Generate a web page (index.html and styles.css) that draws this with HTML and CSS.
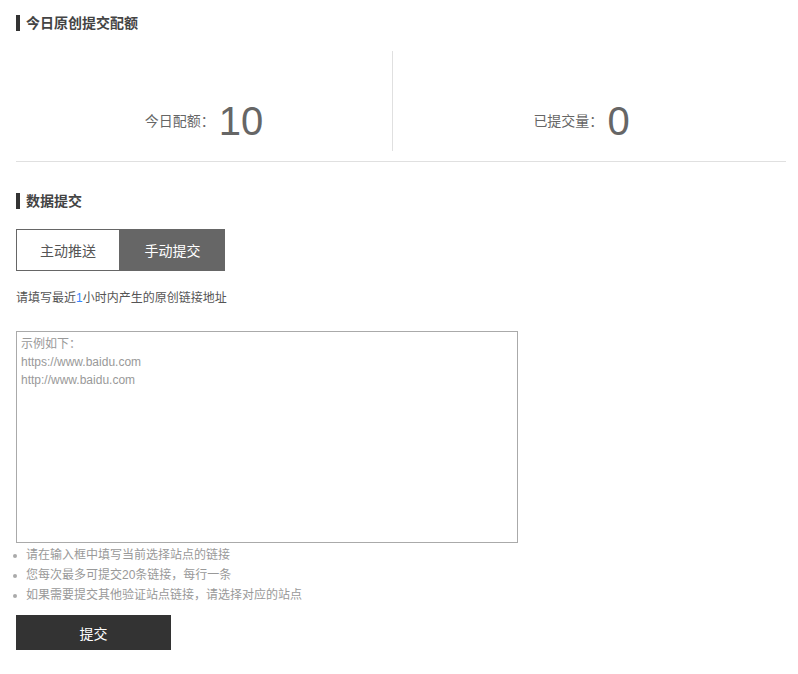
FILE: index.html
```html
<!DOCTYPE html>
<html lang="zh-CN">
<head>
<meta charset="utf-8">
<title>原创提交</title>
<link rel="stylesheet" href="styles.css">
</head>
<body>
<div class="page">
  <h2 class="section-title">今日原创提交配额</h2>
  <div class="stats">
    <div class="stat stat-left">
      <span class="stat-label">今日配额：</span><span class="stat-num">10</span>
    </div>
    <div class="stat">
      <span class="stat-label">已提交量：</span><span class="stat-num">0</span>
    </div>
  </div>

  <h2 class="section-title section-title-2">数据提交</h2>
  <div class="tabs">
    <div class="tab">主动推送</div>
    <div class="tab tab-active">手动提交</div>
  </div>
  <p class="hint">请填写最近<span class="hl">1</span>小时内产生的原创链接地址</p>
  <textarea class="urls" placeholder="示例如下：&#10;https://www.baidu.com&#10;http://www.baidu.com"></textarea>
  <ul class="notes">
    <li>请在输入框中填写当前选择站点的链接</li>
    <li>您每次最多可提交20条链接，每行一条</li>
    <li>如果需要提交其他验证站点链接，请选择对应的站点</li>
  </ul>
  <button class="submit" type="button">提交</button>
</div>
</body>
</html>
```

FILE: styles.css
```css
html, body {
  margin: 0;
  padding: 0;
  background: #fff;
}
body {
  font-family: "Liberation Sans", "Noto Sans CJK SC", sans-serif;
  font-size: 12px;
  color: #333;
}
.page {
  padding: 15px 12px 0 16px;
}
.section-title {
  margin: 0;
  height: 16px;
  line-height: 16px;
  border-left: 4px solid #333;
  padding-left: 6px;
  font-size: 14px;
  font-weight: bold;
  color: #444;
}
.section-title-2 {
  margin-top: 31px;
}
.stats {
  display: flex;
  padding: 20px 0 10px;
  border-bottom: 1px solid #e0e0e0;
}
.stat {
  width: 377px;
  height: 100px;
  box-sizing: border-box;
  display: flex;
  align-items: flex-end;
  justify-content: center;
  padding-bottom: 10px;
  color: #666;
}
.stat-left {
  border-right: 1px solid #e0e0e0;
}
.stat-label {
  font-size: 14px;
  line-height: 40px;
  margin-right: 4px;
}
.stat-num {
  font-size: 40px;
  line-height: 40px;
  color: #666;
}
.tabs {
  display: flex;
  margin-top: 20px;
}
.tab {
  width: 104px;
  height: 42px;
  box-sizing: border-box;
  display: flex;
  align-items: center;
  justify-content: center;
  font-size: 14px;
  color: #555;
  border: 1px solid #666;
}
.tab-active {
  background: #666;
  color: #fff;
  width: 105px;
}
.hint {
  margin: 17px 0 0;
  line-height: 20px;
  font-size: 12px;
  color: #555;
}
.hl {
  color: #3385ff;
}
.urls {
  display: block;
  margin-top: 23px;
  width: 502px;
  height: 212px;
  box-sizing: border-box;
  border: 1px solid #aaa;
  padding: 3px 4px;
  font-family: "Liberation Sans", "Noto Sans CJK SC", sans-serif;
  font-size: 12px;
  line-height: 18px;
  color: #333;
  resize: none;
  outline: none;
}
.urls::placeholder {
  color: #999;
}
.notes {
  list-style: none;
  margin: 2px 0 0;
  padding: 0 0 0 10px;
  color: #999;
  font-size: 12px;
  line-height: 20px;
}
.notes li::before {
  content: "";
  display: inline-block;
  width: 4px;
  height: 4px;
  border-radius: 50%;
  background: #aaa;
  margin-left: -13px;
  margin-right: 9px;
  vertical-align: middle;
}
.submit {
  display: block;
  margin-top: 10px;
  width: 155px;
  height: 35px;
  border: 0;
  background: #333;
  color: #fff;
  font-family: "Liberation Sans", "Noto Sans CJK SC", sans-serif;
  font-size: 14px;
  padding: 0;
  cursor: pointer;
}
```
